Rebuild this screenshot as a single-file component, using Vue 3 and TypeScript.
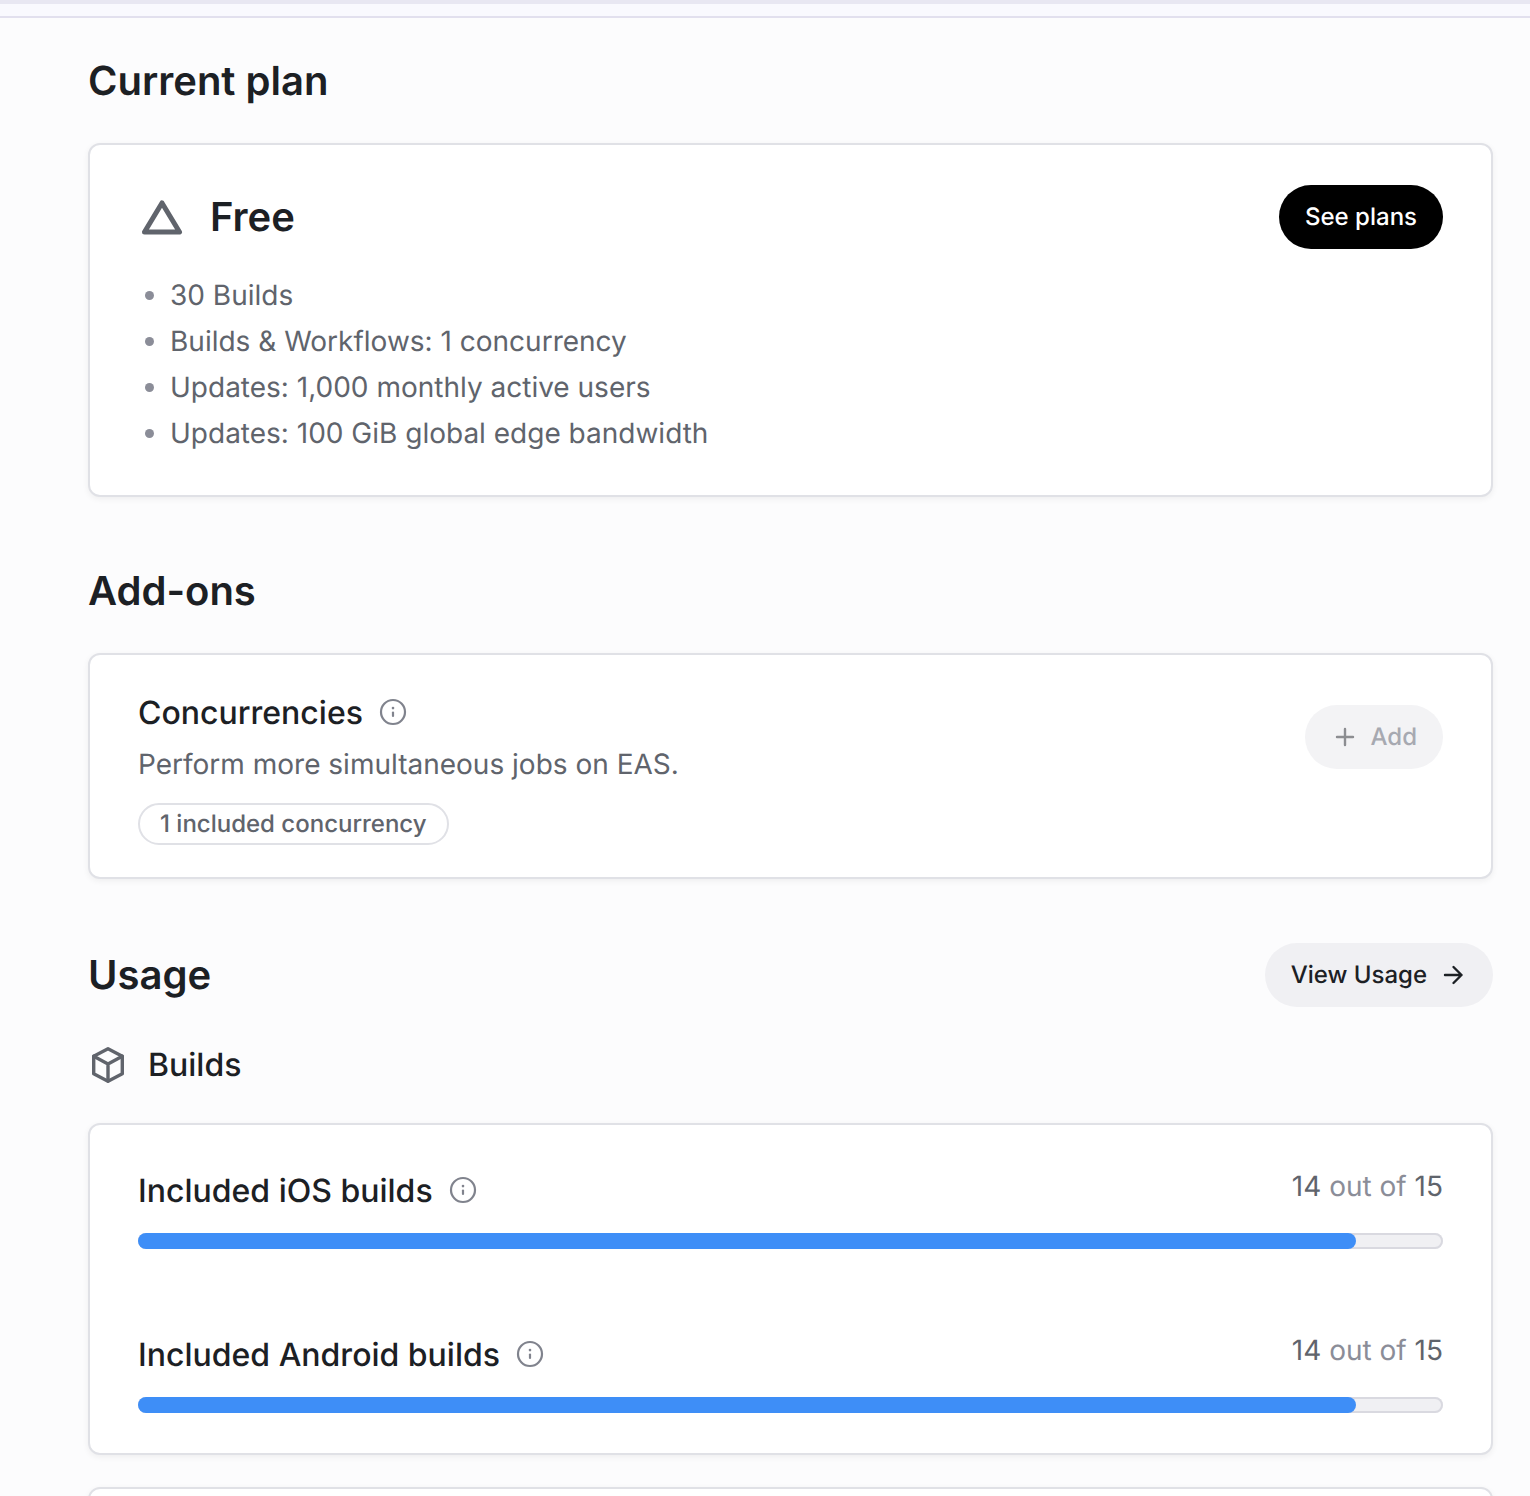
<script setup lang="ts">
interface Usage {
  id: string
  label: string
  used: number
  total: number
}

const features: string[] = [
  '30 Builds',
  'Builds & Workflows: 1 concurrency',
  'Updates: 1,000 monthly active users',
  'Updates: 100 GiB global edge bandwidth',
]

const usages: Usage[] = [
  { id: 'ios', label: 'Included iOS builds', used: 14, total: 15 },
  { id: 'android', label: 'Included Android builds', used: 14, total: 15 },
]

const percent = (u: Usage): string => `${(u.used / u.total) * 100}%`
</script>

<template>
  <div class="page">
    <header class="topbar"></header>
    <main class="content">
      <section>
        <h2 class="heading">Current plan</h2>
        <div class="card plan">
          <div class="plan-head">
            <svg class="plan-icon" viewBox="0 0 48 48" aria-hidden="true">
              <path d="M24 10 L41.500 39 H6.500 Z" />
            </svg>
            <h3 class="plan-name">Free</h3>
            <button type="button" class="btn btn-primary">See plans</button>
          </div>
          <ul class="features">
            <li v-for="f in features" :key="f">{{ f }}</li>
          </ul>
        </div>
      </section>

      <section>
        <h2 class="heading">Add-ons</h2>
        <div class="card addon">
          <div class="addon-body">
            <h3 class="title">
              Concurrencies
              <svg class="info" viewBox="0 0 32 32" aria-hidden="true">
                <circle cx="16" cy="15" r="12" />
                <path d="M16 15.500 V19" />
                <path class="dot" d="M16 11 V11.100" />
              </svg>
            </h3>
            <p class="desc">Perform more simultaneous jobs on EAS.</p>
            <span class="badge">1 included concurrency</span>
          </div>
          <button type="button" class="btn btn-add" disabled>
            <svg class="btn-icon" viewBox="0 0 32 32" aria-hidden="true">
              <path d="M16 8 V24 M8 16 H24" />
            </svg>
            Add
          </button>
        </div>
      </section>

      <section>
        <div class="usage-head">
          <h2 class="heading">Usage</h2>
          <button type="button" class="btn btn-secondary">
            View Usage
            <svg class="btn-icon" viewBox="0 0 32 32" aria-hidden="true">
              <path d="M8 16 H24.500 M16.500 8 L24.500 16 L16.500 24" />
            </svg>
          </button>
        </div>
        <h3 class="subhead">
          <svg class="cube" viewBox="0 0 40 40" aria-hidden="true">
            <path d="M20 3.800 L34.300 11.300 V28.700 L20 36.200 L5.700 28.700 V11.300 Z" />
            <path d="M5.700 11.300 L20 19 L34.300 11.300 M20 19 V36" />
          </svg>
          Builds
        </h3>
        <div class="card usage">
          <div v-for="u in usages" :key="u.id">
            <div class="usage-row">
              <h4 :id="u.id" class="title">
                {{ u.label }}
                <svg class="info" viewBox="0 0 32 32" aria-hidden="true">
                  <circle cx="16" cy="15" r="12" />
                  <path d="M16 15.500 V19" />
                  <path class="dot" d="M16 11 V11.100" />
                </svg>
              </h4>
              <p class="count"><b>{{ u.used }}</b> out of <b>{{ u.total }}</b></p>
            </div>
            <div
              class="track"
              role="progressbar"
              :aria-labelledby="u.id"
              :aria-valuenow="u.used"
              aria-valuemin="0"
              :aria-valuemax="u.total"
            >
              <div class="fill" :style="{ width: percent(u) }"></div>
            </div>
          </div>
        </div>
        <div class="card next"></div>
      </section>
    </main>
  </div>
</template>

<style>
html,
body {
  margin: 0;
  background: #fcfcfd;
}
</style>

<style scoped>
.page {
  height: 100vh;
  overflow: hidden;
  font-family: Inter, "Liberation Sans", sans-serif;
  text-rendering: geometricPrecision;
  color: #1c2024;
  background: #fcfcfd;
}
h2,
h3,
h4,
p,
ul {
  margin: 0;
  padding: 0;
  font-weight: 400;
}
svg {
  flex: none;
  fill: none;
  stroke: currentColor;
  stroke-linecap: round;
  stroke-linejoin: round;
}
.topbar {
  height: 12px;
  border-top: 4px solid #e8e7f2;
  border-bottom: 2px solid #e2e0ee;
  background: #f9f9fe;
}
.content {
  display: flex;
  flex-direction: column;
  gap: 64px;
  padding: 33px 37px 0 88px;
}
.heading {
  font-size: 40px;
  font-weight: 600;
  line-height: 60px;
}
.card {
  box-sizing: border-box;
  margin-top: 32px;
  border: 2px solid #e0e1e6;
  border-radius: 12px;
  background: #fff;
  box-shadow: 0 2px 6px rgba(0, 0, 0, 0.06);
}
.plan {
  padding: 40px 48px 39px;
}
.plan-head {
  display: flex;
  align-items: center;
  gap: 24px;
}
.plan-icon {
  width: 48px;
  height: 48px;
  color: #60646c;
  stroke-width: 5;
}
.plan-name {
  flex: 1;
  font-size: 40px;
  font-weight: 600;
  line-height: 60px;
}
.features {
  margin-top: 23px;
  list-style: none;
  color: #60646c;
  font-size: 28px;
  line-height: 46px;
}
.features li {
  display: flex;
  align-items: center;
  gap: 16px;
  padding-left: 7px;
}
.features li::before {
  content: "";
  width: 9px;
  height: 9px;
  border-radius: 50%;
  background: #8b8d98;
}
.btn {
  display: inline-flex;
  align-items: center;
  gap: 10px;
  height: 64px;
  padding: 0 26px;
  border: 0;
  border-radius: 32px;
  font-family: inherit;
  font-size: 24px;
  font-weight: 500;
  line-height: 32px;
  text-rendering: inherit;
  white-space: nowrap;
}
.btn-primary {
  background: #000;
  color: #fff;
}
.btn-add {
  margin-top: 18px;
  padding-left: 24px;
  background: #f3f3f5;
  color: #a7a9b1;
}
.btn-add .btn-icon {
  color: #8c8d91;
}
.btn-secondary {
  padding-right: 24px;
  background: #f0f0f3;
  color: #1c2024;
}
.btn-icon {
  width: 32px;
  height: 32px;
  stroke-width: 2.4;
}
.addon {
  display: flex;
  align-items: flex-start;
  justify-content: space-between;
  padding: 32px 48px;
}
.addon-body {
  display: flex;
  flex-direction: column;
  align-items: flex-start;
}
.title {
  display: flex;
  align-items: center;
  gap: 14px;
  font-size: 32px;
  font-weight: 500;
  line-height: 52px;
}
.info {
  width: 32px;
  height: 32px;
  color: #80838d;
  stroke-width: 2.2;
}
.info .dot {
  stroke-width: 2.6;
}
.desc {
  margin-top: 2px;
  color: #60646c;
  font-size: 28px;
  line-height: 46px;
}
.badge {
  margin-top: 16px;
  padding: 0 20px;
  border: 2px solid #e0e1e6;
  border-radius: 21px;
  color: #60646c;
  font-size: 24px;
  font-weight: 500;
  line-height: 38px;
}
.usage-head {
  display: flex;
  align-items: center;
  justify-content: space-between;
}
.subhead {
  display: flex;
  align-items: center;
  gap: 20px;
  margin-top: 32px;
  font-size: 32px;
  font-weight: 500;
  line-height: 52px;
}
.cube {
  width: 40px;
  height: 40px;
  color: #60646c;
  stroke-width: 3.4;
}
.usage {
  display: flex;
  flex-direction: column;
  gap: 80px;
  padding: 40px 48px;
}
.usage-row {
  display: flex;
  align-items: flex-start;
  justify-content: space-between;
}
.count {
  color: #8b8d98;
  font-size: 28px;
  line-height: 42px;
}
.count b {
  color: #60646c;
  font-weight: 400;
}
.track {
  height: 16px;
  margin-top: 16px;
  border-radius: 8px;
  background: #f0f0f3;
  box-shadow: inset 0 0 0 2px #d9d9e0;
}
.fill {
  height: 100%;
  border-radius: 8px;
  background: #3e8ef7;
}
.next {
  height: 332px;
}
</style>
